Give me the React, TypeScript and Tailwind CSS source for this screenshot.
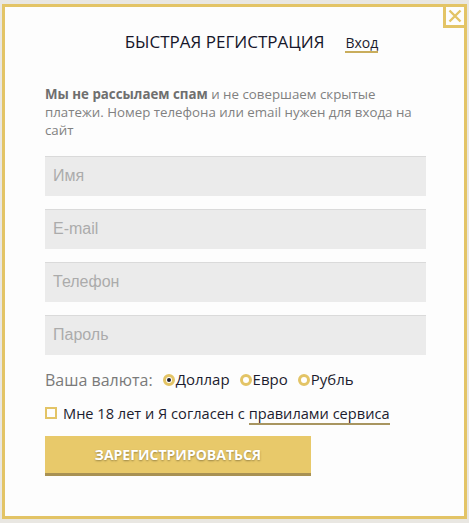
export default function App() {
  const font = { fontFamily: '"Open Sans", "Noto Sans", sans-serif' };
  return (
    <div className="w-[469px] h-[523px] bg-[#e9e7e2] pt-[4px] pl-[2px]" style={font}>
      <div className="relative w-[465px] h-[515px] bg-[#fdfdfd] border-[3px] border-[#e3c466]">
        <button className="absolute -top-[3px] -right-[3px] w-[24px] h-[24px] border-[3px] border-[#e3c466] bg-[#fdfdfd] flex items-center justify-center">
          <svg width="14" height="14" viewBox="0 0 14 14">
            <path d="M1.5 1.5 L12.5 12.5 M12.5 1.5 L1.5 12.5" stroke="#e3c466" strokeWidth="2.4" />
          </svg>
        </button>

        <div className="flex items-baseline justify-center gap-[21px] pt-[22px] pl-[34px]">
          <h1 className="text-[17px] text-[#16162a]">БЫСТРАЯ РЕГИСТРАЦИЯ</h1>
          <a className="text-[14px] text-[#1c1c2e] border-b-2 border-[#c9ad5c] leading-[17px]">Вход</a>
        </div>

        <div className="px-[40px] pt-[30px]">
          <p className="text-[13.3px] leading-[18px] text-[#818181]">
            <b className="font-bold text-[#6f6f6f]">Мы не рассылаем спам</b> и не совершаем скрытые платежи. Номер телефона или email нужен для входа на сайт
          </p>

          <div className="flex flex-col gap-[13px] mt-[17px] w-[381px]" style={{ fontFamily: '"Liberation Sans", Arial, sans-serif' }}>
            {['Имя', 'E-mail', 'Телефон', 'Пароль'].map((p) => (
              <div key={p} className="h-[40px] bg-[#ebebeb] border-t border-[#dadada] flex items-center px-[8px] text-[16px] text-[#ababab]">
                {p}
              </div>
            ))}
          </div>

          <div className="flex items-center mt-[14px] h-[22px]">
            <span className="text-[16px] text-[#7a7a7a] mr-[10px]">Ваша валюта:</span>
            {[
              { l: 'Доллар', on: true },
              { l: 'Евро', on: false },
              { l: 'Рубль', on: false },
            ].map((r) => (
              <span key={r.l} className="flex items-center mr-[10px] text-[15px] text-[#1c1c2e]">
                <span className="w-[12px] h-[12px] rounded-full border-[3px] border-[#e3c466] bg-white flex items-center justify-center mr-[1px]">
                  {r.on && <span className="w-[4px] h-[4px] rounded-full bg-[#1c1c2e]" />}
                </span>
                {r.l}
              </span>
            ))}
          </div>

          <div className="flex items-center mt-[12px] text-[14.6px] text-[#1c1c2e]">
            <span className="w-[12px] h-[12px] border-2 border-[#e3c466] mr-[6px] mb-[1px]" />
            <span>
              Мне 18 лет и Я согласен с{' '}
              <a className="border-b-2 border-[#a89560]">правилами сервиса</a>
            </span>
          </div>

          <button className="mt-[12px] w-[266px] h-[40px] bg-[#e8c96a] border-b-[3px] border-[#a89153] text-white text-[14px] font-bold [text-shadow:0_1px_2px_rgba(0,0,0,0.35)]">
            ЗАРЕГИСТРИРОВАТЬСЯ
          </button>
        </div>
      </div>
    </div>
  );
}
